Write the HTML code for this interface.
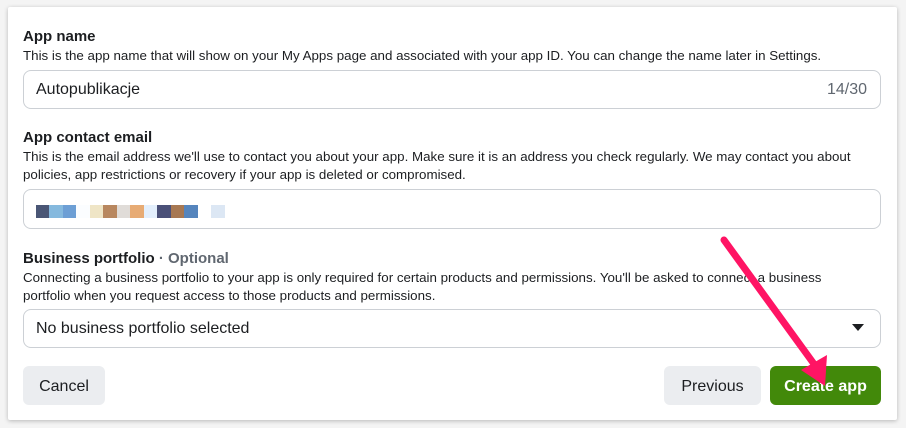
<!DOCTYPE html>
<html><head><style>
body{margin:0;width:906px;height:428px;background:#f4f4f4;font-family:"Liberation Sans",Arial,sans-serif;position:relative;overflow:hidden;color:#1c1e21}
.card{position:absolute;left:8px;top:7px;width:889px;height:413px;background:#fff;box-shadow:0 1px 4px rgba(0,0,0,.25);border-radius:2px}
.a{position:absolute;white-space:nowrap}
.h{font-size:15px;font-weight:bold;left:23px}
.d{font-size:13.35px;color:#1c1e21;left:23px}
.in{position:absolute;left:23px;width:856px;border:1px solid #ccd0d5;border-radius:8px;background:#fff}
.btn{position:absolute;top:366px;height:39px;padding-top:2px;box-sizing:border-box;border-radius:6px;font-size:16px;display:flex;align-items:center;justify-content:center}
</style></head><body>
<div class="card"></div>
<div class="a h" style="top:28px">App name</div>
<div class="a d" style="top:48px">This is the app name that will show on your My Apps page and associated with your app ID. You can change the name later in Settings.</div>
<div class="in" style="top:70px;height:37px"></div>
<div class="a" style="left:36px;top:81px;font-size:16px">Autopublikacje</div>
<div class="a" style="left:827px;top:81px;font-size:16px;color:#606770">14/30</div>
<div class="a h" style="top:129px">App contact email</div>
<div class="a d" style="top:149px">This is the email address we'll use to contact you about your app. Make sure it is an address you check regularly. We may contact you about</div>
<div class="a d" style="top:167px">policies, app restrictions or recovery if your app is deleted or compromised.</div>
<div class="in" style="top:189px;height:38px"></div>
<div class="a" style="left:36px;top:205px;height:13px;display:flex">
<i style="width:13px;background:#4a5675"></i><i style="width:14px;background:#85b9de"></i><i style="width:13px;background:#6d9fd5"></i><i style="width:14px;background:#fbfdff"></i><i style="width:13px;background:#efe5c6"></i><i style="width:14px;background:#b8875f"></i><i style="width:13px;background:#e0dcd8"></i><i style="width:14px;background:#e7ab74"></i><i style="width:13px;background:#e3effc"></i><i style="width:14px;background:#4a5078"></i><i style="width:13px;background:#a77852"></i><i style="width:14px;background:#5585bd"></i><i style="width:13px;background:#fff"></i><i style="width:14px;background:#dce7f4"></i></div>
<div class="a h" style="top:250px">Business portfolio <span style="color:#606770">· Optional</span></div>
<div class="a d" style="top:270px">Connecting a business portfolio to your app is only required for certain products and permissions. You'll be asked to connect a business</div>
<div class="a d" style="top:288px">portfolio when you request access to those products and permissions.</div>
<div class="in" style="top:309px;height:37px"></div>
<div class="a" style="left:36px;top:320px;font-size:16px">No business portfolio selected</div>
<div class="a" style="left:852px;top:324px;width:0;height:0;border-left:6px solid transparent;border-right:6px solid transparent;border-top:7px solid #1c1e21"></div>
<div class="btn" style="left:23px;width:82px;background:#ebedf0">Cancel</div>
<div class="btn" style="left:664px;width:97px;background:#ebedf0">Previous</div>
<div class="btn" style="left:770px;width:111px;background:#42890a;color:#fff;font-weight:bold">Create app</div>
<svg style="position:absolute;left:0;top:0" width="906" height="428">
<line x1="724" y1="240" x2="814" y2="364" stroke="#ff1464" stroke-width="7" stroke-linecap="round"/>
<polygon points="801,370 827,355 825,386" fill="#ff1464"/>
</svg>
</body></html>
